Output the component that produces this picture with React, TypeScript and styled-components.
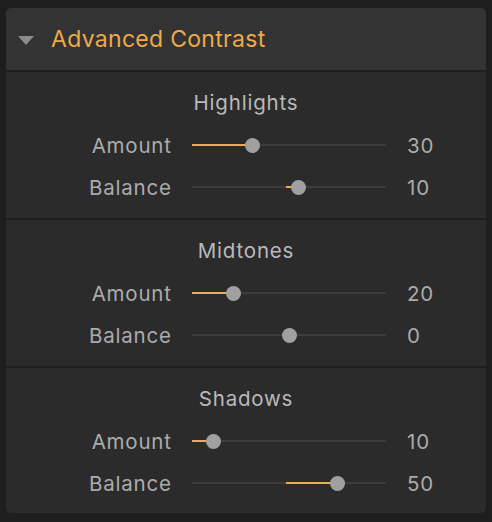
import React from "react";
import styled, { createGlobalStyle } from "styled-components";

const Global = createGlobalStyle`
  html, body { margin: 0; padding: 0; background: #1e1e1e; }
  body { font-family: "Inter", "Liberation Sans", sans-serif; }
`;

const Page = styled.div`
  padding: 8px 6px 9px 6px;
`;

const Panel = styled.div`
  width: 480px;
  border-radius: 5px;
  overflow: hidden;
  background: #1f1f1f;
  display: flex;
  flex-direction: column;
  gap: 2px;
`;

const Header = styled.div`
  height: 62px;
  background: #333333;
  display: flex;
  align-items: center;
  padding-left: 12px;
  gap: 17px;
`;

const Triangle = styled.div`
  width: 0;
  height: 0;
  border-left: 8px solid transparent;
  border-right: 8px solid transparent;
  border-top: 9px solid #8c8c8c;
  margin-top: 2px;
`;

const Title = styled.div`
  color: #eeaa48;
  font-size: 23px;
  letter-spacing: 0.3px;
`;

const Section = styled.div<{ $h: number }>`
  height: ${(p) => p.$h}px;
  background: #2b2b2b;
  display: flex;
  flex-direction: column;
  align-items: center;
  padding-top: 20px;
  box-sizing: border-box;
`;

const Heading = styled.div`
  color: #b9b9b9;
  font-size: 20.5px;
  letter-spacing: 0.8px;
  line-height: 22px;
  margin-bottom: 10px;
`;

const Row = styled.div`
  display: grid;
  grid-template-columns: 165px 194px 80px;
  column-gap: 21px;
  align-items: center;
  height: 42px;
  width: 100%;
`;

const Label = styled.div`
  color: #ababab;
  font-size: 20.5px;
  letter-spacing: 0.8px;
  text-align: right;
  margin-right: -0.8px;
`;

const Value = styled.div`
  color: #ababab;
  font-size: 20.5px;
  letter-spacing: 0.8px;
`;

const Track = styled.div`
  position: relative;
  height: 2px;
  background: #3d3d3d;
`;

const Fill = styled.div`
  position: absolute;
  top: 0;
  height: 2px;
  background: #e8ae57;
`;

const Thumb = styled.div`
  position: absolute;
  top: 1px;
  width: 15px;
  height: 15px;
  margin-left: -7.5px;
  margin-top: -7.5px;
  border-radius: 50%;
  background: #a0a0a0;
`;

type SliderProps = { value: number; balance?: boolean };

const TRACK_W = 194;

function Slider({ value, balance }: SliderProps) {
  let pos: number;
  let from: number;
  if (balance) {
    pos = TRACK_W / 2 + (value / 100) * (TRACK_W / 2);
    from = TRACK_W / 2 - 3;
  } else {
    pos = 2 + value * 1.96;
    from = 0;
  }
  const left = Math.min(from, pos);
  const width = Math.abs(pos - from);
  return (
    <Track>
      {value !== 0 && <Fill style={{ left, width }} />}
      <Thumb style={{ left: pos }} />
    </Track>
  );
}

const sections = [
  { name: "Highlights", amount: 30, balance: 10, h: 146 },
  { name: "Midtones", amount: 20, balance: 0, h: 146 },
  { name: "Shadows", amount: 10, balance: 50, h: 145 },
];

export default function App() {
  return (
    <>
      <Global />
      <Page>
        <Panel>
          <Header>
            <Triangle />
            <Title>Advanced Contrast</Title>
          </Header>
          {sections.map((s) => (
            <Section key={s.name} $h={s.h}>
              <Heading>{s.name}</Heading>
              <Row>
                <Label>Amount</Label>
                <Slider value={s.amount} />
                <Value>{s.amount}</Value>
              </Row>
              <Row>
                <Label>Balance</Label>
                <Slider value={s.balance} balance />
                <Value>{s.balance}</Value>
              </Row>
            </Section>
          ))}
        </Panel>
      </Page>
    </>
  );
}
